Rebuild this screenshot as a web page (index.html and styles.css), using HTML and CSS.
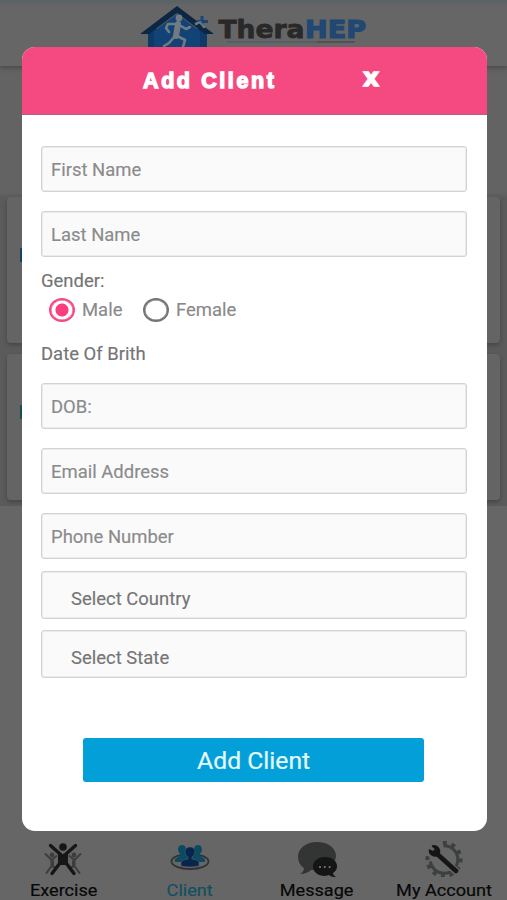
FILE: index.html
```
<!DOCTYPE html>
<html lang="en">
<head>
<meta charset="utf-8">
<title>Add Client</title>
<link rel="stylesheet" href="styles.css">
</head>
<body>
<div class="app">
  <header class="topbar">
    <svg class="logo" width="240" height="64" viewBox="0 0 240 64">
      <path d="M19 29h59v35H19z" fill="#0e3a68"/>
      <path d="M11 34 48 6l37 28h-9L48 13 20 34z" fill="#0b2744"/>
      <path d="M25 31 48 14l23 17v20H25z" fill="#124376"/>
      <g fill="none" stroke="#737b82" stroke-linecap="round" stroke-linejoin="round">
        <circle cx="50" cy="18" r="2.400" fill="#737b82" stroke-width="2"/>
        <path d="m49 24-2 12" stroke-width="6"/>
        <path d="m47 24-8 0-2 4 3 4M52 26l5 3 4-2M46 36l-6 7-5 3M48 36l8 4-2 7" stroke-width="2.600"/>
        <path d="m67 24 4-2 4 5" stroke-width="2.500"/>
      </g>
      <path d="M73 16v10M68 21.500h11" stroke="#1d4674" stroke-width="3"/>
      <path d="m66 24 5-2 4 5" fill="none" stroke="#6c7680" stroke-width="2"/>
      <text class="logo-thera" x="89.500" y="38" textLength="86" lengthAdjust="spacingAndGlyphs">Thera</text>
      <text class="logo-hep" x="176" y="38" textLength="61" lengthAdjust="spacingAndGlyphs">HEP</text>
      <path d="M98 42h90" stroke="#405666" stroke-width="1"/>
      <path d="M188 42h38" stroke="#4c4c4c" stroke-width="1.500"/>
    </svg>
  </header>
  <main class="list">
    <div class="card"><span class="accent blue"></span></div>
    <div class="card"><span class="accent teal"></span></div>
  </main>
  <nav class="tabs">
    <a class="tab">
      <svg width="40" height="36" viewBox="0 0 40 36">
        <g fill="none" stroke="#3d3d3d" stroke-width="2" stroke-linecap="round" stroke-linejoin="round">
          <path d="m2.500 13 6 6v6l-5 7M37.500 13l-6 6v6l5 7M8.500 19l5-4M31.500 19l-5-4M10 20v6M30 20v6M9 25l4 2M31 25l-4 2"/>
          <circle cx="9" cy="14" r="1.400" fill="#3d3d3d"/><circle cx="31" cy="14" r="1.400" fill="#3d3d3d"/>
        </g>
        <circle cx="20" cy="6" r="3.800" fill="#161616"/>
        <path d="M7.500 4.500 17 13M32.500 4.500 23 13M17 22 9 32.500M23 22l8 10.500" fill="none" stroke="#161616" stroke-width="3.400" stroke-linecap="round"/>
        <path d="m15 11 5 2 5-2v13H15z" fill="#161616"/>
      </svg>
      <span class="tab-label">Exercise</span>
    </a>
    <a class="tab active">
      <svg width="40" height="36" viewBox="0 0 40 36">
        <ellipse cx="20" cy="20.500" rx="18.500" ry="7.500" fill="#666" stroke="#333" stroke-width="1.800"/>
        <g fill="#0b4b61"><ellipse cx="12" cy="8.500" rx="4" ry="4.500"/><ellipse cx="28" cy="8.500" rx="4" ry="4.500"/><path d="M5 21v-3l5-3v-4h5l4 5v5zM35 21v-3l-5-3v-4h-5l-4 5v5z"/></g>
        <path d="M11 25v-3q0-3 7-4v-2q-3-2-3-5.500C15 8 17 6 20 6s5 2 5 4.500q0 3.500-3 5.500v2q7 1 7 4v3q-9 2-18 0z" fill="#09254e" stroke="#5a6468" stroke-width=".5"/>
      </svg>
      <span class="tab-label">Client</span>
    </a>
    <a class="tab">
      <svg width="40" height="36" viewBox="0 0 40 36">
        <path d="M20 1C8 1 1 8 1 16c0 5 3 9 6 11 0 3-2 5-4 6 5 0 9-2 11-4 16 1 25-6 25-14C39 7 31 1 20 1z" fill="#333535"/>
        <path d="M28 16c-7 0-12 4-12 9.500S21 35 28 35l4-1c2 2 5 2 7 2-2-1-3-3-3-4 3-2 4-4 4-7 0-5-5-9-12-9z" fill="#151515"/>
        <circle cx="23" cy="26" r="1.100" fill="#777"/><circle cx="27.800" cy="26" r="1.100" fill="#777"/><circle cx="32.600" cy="26" r="1.100" fill="#777"/>
      </svg>
      <span class="tab-label">Message</span>
    </a>
    <a class="tab">
      <svg width="40" height="36" viewBox="0 0 40 36">
        <circle cx="20" cy="18.500" r="13.800" fill="none" stroke="#3c4040" stroke-width="3" stroke-dasharray="63 23.700" transform="rotate(-92 20 18.500)"/>
        <circle cx="20" cy="18.500" r="16.600" fill="none" stroke="#3c4040" stroke-width="4" stroke-dasharray="4 4.690" transform="rotate(-94 20 18.500)"/>
        <path d="M0 0h17v8l-7 6H0z" fill="#666"/>
        <path d="m12 13 21 18" stroke="#666" stroke-width="7.500"/>
        <path d="m11 11 21 19" stroke="#161616" stroke-width="4.600" stroke-linecap="round"/>
        <path d="m8.500 5 3.500 3.500-2 3L5.500 9A5.500 5.500 0 0 0 14 14 5.500 5.500 0 0 0 8.500 5z" fill="#161616" stroke="#161616" stroke-width="1.500" stroke-linejoin="round"/>
      </svg>
      <span class="tab-label">My Account</span>
    </a>
  </nav>

  <section class="modal">
    <div class="modal-head">
      <h1 class="title">Add Client</h1>
      <button class="close" type="button">x</button>
    </div>
    <form class="form">
      <div class="field spaced"><span class="t">First Name</span></div>
      <div class="field spaced"><span class="t">Last Name</span></div>
      <div class="caption gender"><span class="t">Gender:</span></div>
      <div class="radios">
        <span class="radio on"></span><span class="radio-label male"><span class="t">Male</span></span>
        <span class="radio"></span><span class="radio-label"><span class="t">Female</span></span>
      </div>
      <div class="caption birth"><span class="t">Date Of Brith</span></div>
      <div class="field spaced"><span class="t">DOB:</span></div>
      <div class="field spaced"><span class="t">Email Address</span></div>
      <div class="field phone-field"><span class="t">Phone Number</span></div>
      <div class="field select"><span class="t">Select Country</span></div>
      <div class="field select"><span class="t">Select State</span></div>
      <button class="submit" type="button"><span>Add Client</span></button>
    </form>
  </section>
</div>
</body>
</html>
```
FILE: styles.css
```
* { box-sizing: border-box; }

body {
  margin: 0;
  font-family: Roboto, "Liberation Sans", sans-serif;
}

.app {
  position: relative;
  width: 507px;
  height: 900px;
  overflow: hidden;
  display: flex;
  flex-direction: column;
  background: #666;
}

.topbar {
  height: 66px;
  display: flex;
  padding-left: 129px;
  background: linear-gradient(#596265, #666 7px);
  box-shadow: 0 2px 4px #4a4a4a;
  z-index: 1;
}

.logo { display: block; }

.logo-thera,
.logo-hep {
  font: bold 25px "DejaVu Sans", sans-serif;
  fill: #292929;
  stroke: #292929;
  stroke-width: .8px;
}

.logo-hep {
  fill: #214873;
  stroke: #214873;
  stroke-width: 1.200px;
}

.list {
  height: 440px;
  padding: 131px 7px 0;
  display: flex;
  flex-direction: column;
  gap: 11px;
  background: linear-gradient(#636363 126px, #5b5b5b 132px);
}

.card {
  height: 146px;
  border-radius: 4px;
  background: #646464;
  box-shadow: 0 2px 4px #454545;
  padding: 51px 0 0 13px;
}

.accent {
  display: block;
  width: 10px;
  height: 14px;
}

.blue { background: #164263; }
.teal { background: #164f51; }

.tabs {
  margin-top: auto;
  height: 59px;
  display: grid;
  grid-template-columns: repeat(4, 1fr);
}

.tab {
  display: flex;
  flex-direction: column;
  align-items: center;
  color: #080808;
  font-size: 17px;
}

.tab svg { flex: none; }

.tab-label {
  line-height: 20px;
  margin-top: 3px;
  white-space: nowrap;
  transform: scaleX(1.065);
  -webkit-text-stroke: .2px currentColor;
}

.active { color: #12505f; }

.modal {
  position: absolute;
  z-index: 2;
  left: 21.500px;
  top: 46.500px;
  width: 465px;
  height: 784px;
  border-radius: 13px;
  overflow: hidden;
  background: #fff;
}

.modal-head {
  height: 68px;
  display: flex;
  align-items: flex-start;
  padding: 21px 0 0 121.500px;
  background: #f54982;
  border-bottom: 1px solid #ac6380;
  color: #fff;
}

.title {
  margin: 0;
  width: 220px;
  font: bold 21.500px/27px "Liberation Sans", sans-serif;
  letter-spacing: 2.600px;
  -webkit-text-stroke: 1.400px #fff;
}

.close {
  border: 0;
  padding: 0;
  background: none;
  color: #fff;
  font: bold 25px/20px "DejaVu Sans", sans-serif;
  -webkit-text-stroke: 1.400px #fff;
}

.form {
  padding: 31px 20px 0 19.500px;
  display: flex;
  flex-direction: column;
}

.t {
  display: inline-block;
  transform: scaleX(1.055);
  transform-origin: left center;
  -webkit-text-stroke: .15px currentColor;
}

.field {
  flex: none;
  height: 46px;
  padding-left: 9px;
  border: 1px solid #d3d3d3;
  border-radius: 3px;
  box-shadow: inset 0 0 0 1px #ebebeb;
  background: #fafafa;
  color: #8b8b8b;
  font-size: 17.500px;
  line-height: 46px;
}

.spaced { margin-bottom: 19px; }
.phone-field { margin-bottom: 12px; }

.select {
  height: 48px;
  padding-left: 29px;
  margin-bottom: 11px;
  line-height: 54px;
  color: #757575;
}

.caption {
  color: #757575;
  font-size: 17.500px;
  line-height: 24px;
}

.gender { margin-top: -7px; }

.radios {
  height: 35px;
  padding-left: 7.500px;
  display: flex;
  align-items: center;
  color: #8a8a8a;
  font-size: 17.500px;
}

.radio {
  width: 26px;
  height: 24px;
  border: 2px solid #757575;
  border-radius: 50%;
  box-shadow: inset 0 0 0 .5px #757575;
}

.radio.on {
  border-color: #f54982;
  background: radial-gradient(circle, #fb3e7d 6px, #fff 7px);
  box-shadow: inset 0 0 0 .5px #f54982;
}

.radio-label { margin-left: 7.500px; }

.male { width: 60.500px; }

.birth { margin: 14px 0 17px; }

.submit {
  align-self: center;
  margin: 49px 1px 0 0;
  width: 341px;
  height: 44px;
  border: 0;
  border-radius: 3px;
  background: #039fd8;
  color: #e5faff;
  font: 23px/47px Roboto, sans-serif;
  padding: 0;
}

.submit span {
  display: inline-block;
  transform: scaleX(1.075);
  -webkit-text-stroke: .2px currentColor;
}
```
